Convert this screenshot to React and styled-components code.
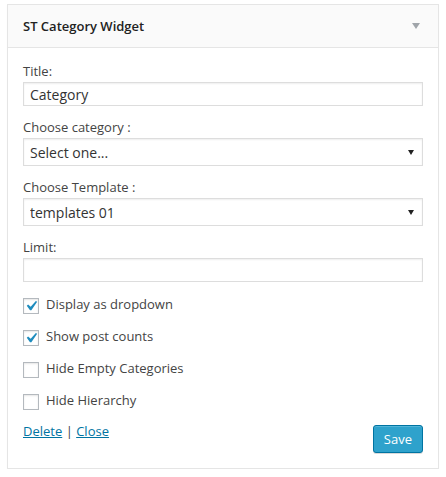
import React from 'react';
import styled, { createGlobalStyle } from 'styled-components';

const GlobalStyle = createGlobalStyle`
  body {
    margin: 0;
    background: #fff;
    font-family: "Open Sans", "Liberation Sans", sans-serif;
    font-size: 13px;
    color: #444;
  }
`;

const Page = styled.div`
  padding: 4px 7px 0 7px;
`;

const Widget = styled.div`
  border: 1px solid #e5e5e5;
  background: #fff;
  box-shadow: 0 1px 1px rgba(0, 0, 0, 0.04);
`;

const Header = styled.div`
  display: flex;
  align-items: center;
  justify-content: space-between;
  padding: 12px 15px;
  background: #fafafa;
  border-bottom: 1px solid #e5e5e5;
`;

const Title = styled.h3`
  margin: 0;
  font-size: 13px;
  line-height: 18px;
  font-weight: 600;
  color: #222;
`;

const Toggle = styled.span`
  width: 0;
  height: 0;
  margin-right: 3px;
  border-left: 4px solid transparent;
  border-right: 4px solid transparent;
  border-top: 6px solid #a0a5aa;
`;

const Body = styled.div`
  padding: 14px 15px 15px;
`;

const Field = styled.p`
  margin: 0 0 12px;
`;

const Label = styled.label`
  display: block;
  line-height: 18px;
  margin-bottom: 2px;
`;

const TextInput = styled.input`
  box-sizing: border-box;
  display: block;
  width: 100%;
  height: 24px;
  margin: 0;
  padding: 0 6px;
  border: 1px solid #ddd;
  box-shadow: inset 0 1px 2px rgba(0, 0, 0, 0.07);
  font-family: inherit;
  font-size: 14px;
  color: #333;
  outline: none;
`;

const SelectWrap = styled.div`
  position: relative;

  &::after {
    content: '';
    position: absolute;
    right: 9px;
    top: 12px;
    border-left: 3.5px solid transparent;
    border-right: 3.5px solid transparent;
    border-top: 5px solid #222;
    pointer-events: none;
  }
`;

const Select = styled.select`
  box-sizing: border-box;
  display: block;
  width: 100%;
  height: 28px;
  margin: 0;
  padding: 0 6px;
  appearance: none;
  background: #fff;
  border: 1px solid #ddd;
  border-radius: 0;
  box-shadow: inset 0 1px 2px rgba(0, 0, 0, 0.07);
  font-family: inherit;
  font-size: 14px;
  color: #333;
  outline: none;
`;

const Checks = styled.div`
  display: flex;
  flex-direction: column;
  gap: 13px;
  margin-top: 13px;
`;

const CheckRow = styled.label`
  display: flex;
  align-items: flex-start;
  gap: 7px;
  line-height: 18px;
`;

const Box = styled.span`
  position: relative;
  box-sizing: border-box;
  flex: none;
  width: 16px;
  height: 16px;
  margin-top: 3px;
  border: 1px solid #b4b9be;
  background: #fff;
  box-shadow: inset 0 1px 2px rgba(0, 0, 0, 0.1);

  svg {
    position: absolute;
    left: -3px;
    top: -3px;
  }
`;

const Footer = styled.div`
  display: flex;
  justify-content: space-between;
  align-items: flex-start;
  margin-top: 12px;
`;

const Links = styled.div`
  line-height: 18px;
  color: #444;
`;

const Link = styled.a`
  color: #0074a2;
  text-decoration: underline;
`;

const SaveButton = styled.button`
  margin-top: 3px;
  height: 28px;
  padding: 0 10px;
  background: #2ea2cc;
  border: 1px solid #0074a2;
  border-radius: 3px;
  box-shadow: inset 0 1px 0 rgba(120, 200, 230, 0.5), 0 1px 0 rgba(0, 0, 0, 0.15);
  font-family: inherit;
  font-size: 13px;
  line-height: 26px;
  color: #fff;
`;

const Check = () => (
  <svg width="20" height="20" viewBox="0 0 20 20">
    <path d="M14.83 4.89l1.34.94-5.81 8.38H9.02L5.78 9.67l1.34-1.25 2.57 2.4z" fill="#1e8cbe" />
  </svg>
);

const options = [
  { label: 'Display as dropdown', checked: true },
  { label: 'Show post counts', checked: true },
  { label: 'Hide Empty Categories', checked: false },
  { label: 'Hide Hierarchy', checked: false },
];

export default function App() {
  return (
    <Page>
      <GlobalStyle />
      <Widget>
        <Header>
          <Title>ST Category Widget</Title>
          <Toggle />
        </Header>
        <Body>
          <Field>
            <Label>Title:</Label>
            <TextInput defaultValue="Category" />
          </Field>
          <Field>
            <Label>Choose category :</Label>
            <SelectWrap>
              <Select defaultValue="">
                <option value="">Select one...</option>
              </Select>
            </SelectWrap>
          </Field>
          <Field>
            <Label>Choose Template :</Label>
            <SelectWrap>
              <Select defaultValue="01">
                <option value="01">templates 01</option>
              </Select>
            </SelectWrap>
          </Field>
          <Field>
            <Label>Limit:</Label>
            <TextInput defaultValue="" />
          </Field>
          <Checks>
            {options.map(o => (
              <CheckRow key={o.label}>
                <Box>{o.checked && <Check />}</Box>
                {o.label}
              </CheckRow>
            ))}
          </Checks>
          <Footer>
            <Links>
              <Link href="#">Delete</Link> | <Link href="#">Close</Link>
            </Links>
            <SaveButton>Save</SaveButton>
          </Footer>
        </Body>
      </Widget>
    </Page>
  );
}
